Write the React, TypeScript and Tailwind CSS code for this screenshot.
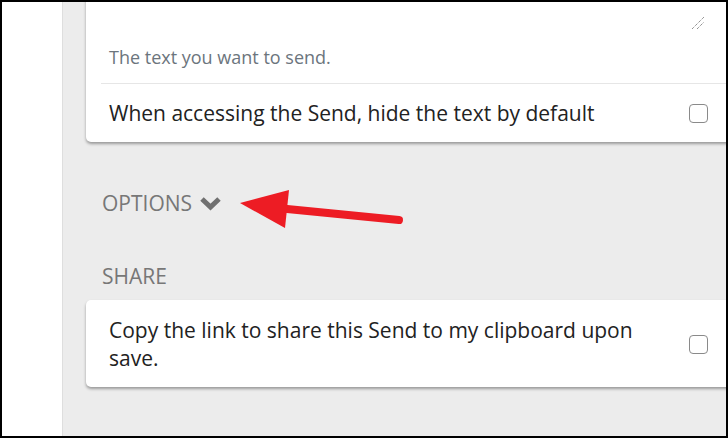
import React from 'react';

const Checkbox = () => (
  <div className="w-[19px] h-[19px] shrink-0 rounded-[4px] border border-[#8a8a8a] bg-white" />
);

const App = () => {
  return (
    <div
      className="relative w-[728px] h-[438px] overflow-hidden border-2 border-black flex bg-white"
      style={{ fontFamily: '"Open Sans", "Noto Sans", sans-serif' }}
    >
      <div className="w-[61px] shrink-0 bg-white border-r border-[#dedede]" />
      <div className="flex-1 bg-[#ececec] pl-[23px]">
        <div className="mt-[-20px] mr-[-12px] bg-white rounded-[5px] shadow-[0_2px_3px_rgba(0,0,0,0.35)]">
          <div className="relative h-[60px]">
            <svg
              className="absolute left-[605px] bottom-[12px]"
              width="14"
              height="14"
              viewBox="0 0 14 14"
            >
              <path d="M1 13 L13 1 M6 13 L13 6" stroke="#666" strokeWidth="1" strokeDasharray="1 1" />
            </svg>
          </div>
          <div className="pl-[23px] pt-[2px] h-[41px] text-[18px] leading-[26px] text-[#6c757d]">
            The text you want to send.
          </div>
          <div className="ml-[15px] border-t border-[#e6e6e6]" />
          <div className="flex items-center h-[58px] pl-[23px] pr-[30px]">
            <div className="flex-1 text-[21px] leading-[28px] text-[#222]">
              When accessing the Send, hide the text by default
            </div>
            <Checkbox />
          </div>
        </div>

        <div className="mt-[47px] ml-[16px] flex items-center gap-[7px] text-[21px] leading-[28px] text-[#777]">
          <span>OPTIONS</span>
          <svg width="23" height="17" viewBox="0 0 23 17">
            <path d="M3 4 L11.5 12 L20 4" fill="none" stroke="#707070" strokeWidth="5" strokeLinejoin="miter" />
          </svg>
        </div>

        <div className="mt-[45px] ml-[16px] text-[21px] leading-[28px] text-[#777]">SHARE</div>

        <div className="mt-[10px] mr-[-12px] bg-white rounded-[5px] shadow-[0_2px_3px_rgba(0,0,0,0.35)] flex items-center pl-[23px] pr-[30px] pt-[16px] pb-[15px]">
          <div className="flex-1">
            <div className="max-w-[560px] text-[21px] leading-[28px] text-[#222]">
              Copy the link to share this Send to my clipboard upon save.
            </div>
          </div>
          <Checkbox />
        </div>
      </div>

      <svg className="absolute left-0 top-0" width="728" height="438" viewBox="0 0 728 438">
        <line x1="275" y1="206" x2="397" y2="218" stroke="#ed1c24" strokeWidth="8" strokeLinecap="round" />
        <polygon points="238,201 287,188 283,226" fill="#ed1c24" />
      </svg>
    </div>
  );
};

export default App;
